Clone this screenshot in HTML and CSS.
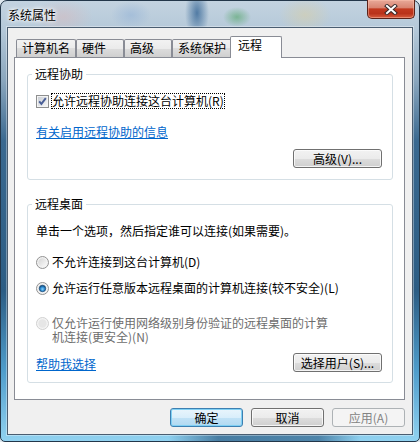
FILE: index.html
```html
<!DOCTYPE html>
<html lang="zh-CN">
<head>
<meta charset="utf-8">
<title>系统属性</title>
<link rel="stylesheet" href="styles.css">
</head>
<body>
<div class="window">
  <div class="titlebar">
    <span class="title">系统属性</span>
    <div class="close">
      <svg width="14" height="11" viewBox="0 0 14 11">
        <path d="M3 2 L11 9 M11 2 L3 9" stroke="#3a2a2a" stroke-width="4" stroke-linecap="square" fill="none"/>
        <path d="M3 2 L11 9 M11 2 L3 9" stroke="#ffffff" stroke-width="2" stroke-linecap="square" fill="none"/>
      </svg>
    </div>
  </div>
  <div class="client">
    <div class="tabs">
      <div class="tab">计算机名</div>
      <div class="tab">硬件</div>
      <div class="tab">高级</div>
      <div class="tab">系统保护</div>
      <div class="tab active">远程</div>
    </div>
    <div class="panel">
      <div class="group g1">
        <div class="legend">远程协助</div>
        <div class="check-row">
          <svg class="cb" width="13" height="13" viewBox="0 0 13 13">
            <defs>
              <linearGradient id="cbg" x1="0" y1="0" x2="1" y2="1">
                <stop offset="0" stop-color="#cbcfd5"/>
                <stop offset="1" stop-color="#f6f6f6"/>
              </linearGradient>
            </defs>
            <rect x="0.5" y="0.5" width="12" height="12" fill="#f4f4f4" stroke="#8e8f8f"/>
            <rect x="2" y="2" width="9" height="9" fill="url(#cbg)"/>
            <path d="M3.2 6.4 L5.4 8.9 L9.8 3.2" fill="none" stroke="#4a5f97" stroke-width="1.9"/>
          </svg>
          <span class="focus">允许远程协助连接这台计算机(R)</span>
        </div>
        <a class="link l1" href="#">有关启用远程协助的信息</a>
        <div class="btn-row"><button class="btn wide">高级(V)...</button></div>
      </div>
      <div class="group g2">
        <div class="legend">远程桌面</div>
        <div class="desc">单击一个选项，然后指定谁可以连接(如果需要)。</div>
        <div class="radio-row r1">
          <svg class="rb" width="13" height="13" viewBox="0 0 13 13">
            <defs>
              <linearGradient id="rg1" x1="0" y1="0" x2="1" y2="1">
                <stop offset="0" stop-color="#d4d4d4"/>
                <stop offset="1" stop-color="#fbfbfb"/>
              </linearGradient>
            </defs>
            <circle cx="6.5" cy="6.5" r="6" fill="#f2f2f2" stroke="#929292"/>
            <circle cx="6.5" cy="6.5" r="4.2" fill="url(#rg1)"/>
          </svg>
          <span>不允许连接到这台计算机(D)</span>
        </div>
        <div class="radio-row r2">
          <svg class="rb" width="13" height="13" viewBox="0 0 13 13">
            <defs>
              <linearGradient id="rg2" x1="0" y1="0" x2="1" y2="1">
                <stop offset="0" stop-color="#d4d4d4"/>
                <stop offset="1" stop-color="#fbfbfb"/>
              </linearGradient>
              <radialGradient id="rdot" cx="0.5" cy="0.6" r="0.6">
                <stop offset="0" stop-color="#8fd0f5"/>
                <stop offset="0.5" stop-color="#2e8fd6"/>
                <stop offset="1" stop-color="#0f3f70"/>
              </radialGradient>
            </defs>
            <circle cx="6.5" cy="6.5" r="6" fill="#f2f2f2" stroke="#929292"/>
            <circle cx="6.5" cy="6.5" r="4.2" fill="url(#rg2)"/>
            <circle cx="6.5" cy="6.5" r="3.2" fill="url(#rdot)" stroke="#1d4f7c" stroke-width="0.8"/>
          </svg>
          <span>允许运行任意版本远程桌面的计算机连接(较不安全)(L)</span>
        </div>
        <div class="radio-row r3 disabled">
          <svg class="rb" width="13" height="13" viewBox="0 0 13 13">
            <circle cx="6.5" cy="6.5" r="6" fill="#f4f4f4" stroke="#d0d0d0"/>
            <circle cx="6.5" cy="6.5" r="4.2" fill="#e6e6e6"/>
          </svg>
          <span class="wrap">仅允许运行使用网络级别身份验证的远程桌面的计算机连接(更安全)(N)</span>
        </div>
        <div class="bottom-row">
          <a class="link l2" href="#">帮助我选择</a>
          <button class="btn wide">选择用户(S)...</button>
        </div>
      </div>
    </div>
    <div class="footer">
      <button class="btn default">确定</button>
      <button class="btn">取消</button>
      <button class="btn disabled">应用(A)</button>
    </div>
  </div>
</div>
</body>
</html>
```

FILE: styles.css
```css
html, body {
  margin: 0;
  padding: 0;
  background: #dfe8ef;
}

body {
  font-family: "Noto Sans CJK SC", "Noto Sans", sans-serif;
  font-size: 12px;
  line-height: 14px;
  color: #000;
}

.window {
  width: 420px;
  height: 442px;
  box-sizing: border-box;
  border: 1px solid #23374a;
  border-radius: 7px 7px 5px 5px;
  padding: 0 6px 6px 6px;
  display: flex;
  flex-direction: column;
  background:
    radial-gradient(ellipse 30px 18px at 62px 16px, rgba(214, 186, 190, 0.55), transparent),
    radial-gradient(ellipse 20px 14px at 130px 14px, rgba(150, 180, 215, 0.6), transparent),
    radial-gradient(ellipse 12px 26px at 196px 12px, rgba(45, 95, 145, 0.75), transparent),
    radial-gradient(ellipse 14px 10px at 236px 16px, rgba(70, 160, 90, 0.55), transparent),
    radial-gradient(ellipse 26px 18px at 304px 14px, rgba(214, 206, 170, 0.6), transparent),
    linear-gradient(to right, transparent 40%, rgba(25, 70, 112, 0.6) 52%, rgba(25, 70, 112, 0.55) 76%, transparent 86%) left bottom / 100% 8px no-repeat,
    linear-gradient(to bottom, #c3d3e0 0, #b5c9d9 28px, #8aa6bd 80px, #3a6990 140px, #2c5d84 290px, #4f9dcb 370px, #92d3f1 441px);
}

.titlebar {
  height: 26px;
  display: flex;
  justify-content: space-between;
  align-items: flex-start;
}

.title {
  margin-left: 1px;
  margin-top: 7px;
  color: #000;
  text-shadow: 0 0 6px #fff, 0 0 4px #fff, 0 0 2px rgba(255,255,255,0.9);
}

.close {
  width: 48px;
  height: 19px;
  box-sizing: border-box;
  margin-top: -1px;
  margin-right: -2px;
  border: 1px solid #5a2219;
  border-top: none;
  border-radius: 0 0 5px 5px;
  background: linear-gradient(to bottom, #e8a999 0%, #d98572 42%, #c2391f 50%, #b9321a 75%, #d75c3e 100%);
  box-shadow: inset 0 0 0 1px rgba(255, 200, 180, 0.45);
  display: flex;
  align-items: center;
  justify-content: center;
}

.client {
  flex: 1;
  background: #f0f0f0;
  border: 1px solid #4a5d70;
  box-shadow: 0 0 0 1px rgba(255, 255, 255, 0.35);
  display: flex;
  flex-direction: column;
  padding-top: 8px;
}

.tabs {
  height: 21px;
  display: flex;
  align-items: flex-end;
  padding-left: 8px;
}

.tab {
  box-sizing: border-box;
  height: 18px;
  min-width: 48px;
  padding: 1px 5px 0 5px;
  border: 1px solid #898c95;
  border-bottom: none;
  border-radius: 2px 2px 0 0;
  background: linear-gradient(to bottom, #f2f2f2 0%, #ebebeb 50%, #dddddd 50%, #cfcfcf 100%);
  white-space: nowrap;
}

.tab.active {
  position: relative;
  z-index: 1;
  width: 52px;
  height: 22px;
  margin-left: -2px;
  margin-bottom: -1px;
  padding: 1px 0 0 7px;
  background: #fff;
}

.panel {
  box-sizing: border-box;
  width: 391px;
  height: 343px;
  margin-left: 6px;
  border: 1px solid #898c95;
  background: #fff;
  padding: 16px 11px 0 12px;
}

.group {
  box-sizing: border-box;
  border: 1px solid #d5dfe5;
  border-radius: 3px;
  padding: 0 10px 0 8px;
  display: flex;
  flex-direction: column;
  align-items: flex-start;
}

.g1 {
  height: 106px;
}

.g2 {
  height: 179px;
  margin-top: 24px;
}

.legend {
  margin-top: -8px;
  margin-left: -4px;
  padding: 0 3px;
  background: #fff;
}

.check-row {
  margin-top: 13px;
  display: flex;
  align-items: center;
  height: 14px;
}

.cb {
  display: block;
  flex: none;
}

.focus {
  margin-left: 3px;
  outline: 1px dotted #000;
  outline-offset: 0;
}

.link {
  color: #0066cc;
  text-decoration: underline;
}

.l1 {
  margin-top: 17px;
}

.btn-row {
  align-self: stretch;
  display: flex;
  justify-content: flex-end;
  margin-top: 10px;
}

.btn {
  box-sizing: border-box;
  height: 19px;
  width: 73px;
  padding: 0;
  margin: 0;
  font: inherit;
  line-height: 16px;
  color: #000;
  border: 1px solid #707070;
  border-radius: 3px;
  background: linear-gradient(to bottom, #f2f2f2 0%, #ebebeb 50%, #dddddd 51%, #cfcfcf 100%);
  box-shadow: inset 0 0 0 1px rgba(252, 252, 252, 0.8);
  text-align: center;
}

.btn.wide {
  width: 89px;
}

.btn.default {
  border-color: #3c7fb1;
  background: linear-gradient(to bottom, #e9f5fc 0%, #d9eefb 50%, #c1e2f6 51%, #b1d9f1 100%);
  box-shadow: inset 0 0 0 1px #7fd0f4;
}

.btn.disabled {
  border-color: #adb2b5;
  background: #f4f4f4;
  box-shadow: none;
  color: #838383;
}

.desc {
  margin-top: 13px;
}

.radio-row {
  display: flex;
  align-items: flex-start;
}

.rb {
  display: block;
  flex: none;
  margin-top: 1px;
  margin-right: 3px;
}

.r1 {
  margin-top: 17px;
}

.r2 {
  margin-top: 12px;
}

.r3 {
  margin-top: 21px;
}

.wrap {
  width: 280px;
}

.disabled {
  color: #6d6d6d;
}

.bottom-row {
  align-self: stretch;
  display: flex;
  justify-content: space-between;
  align-items: flex-start;
  margin-top: 9px;
}

.l2 {
  margin-top: 4px;
}

.footer {
  display: flex;
  justify-content: flex-end;
  gap: 8px;
  margin-top: 8px;
  padding-right: 7px;
}
```
